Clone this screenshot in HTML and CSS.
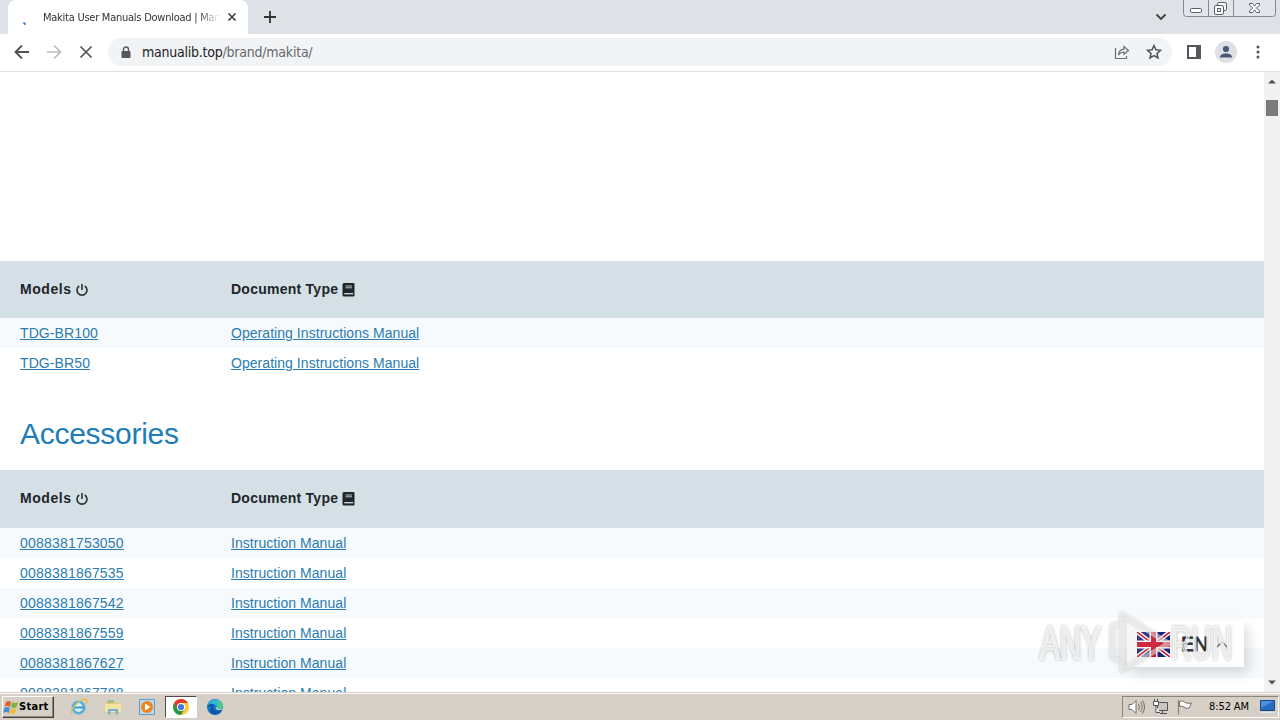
FILE: index.html
```html
<!DOCTYPE html>
<html lang="en">
<head>
    <meta charset="UTF-8">
    <title>Makita User Manuals Download</title>
    <link rel="stylesheet" href="styles.css">
</head>
<body>
    <svg width="0" height="0" class="defs">
        <symbol id="power" viewBox="0 0 14 14">
            <path d="M4.200 3a5 5 0 1 0 5.600 0M7 1v6" fill="none" stroke="#2b3135" stroke-width="1.600"/>
        </symbol>
        <symbol id="book" viewBox="0 0 13 14">
            <path d="M2 0h9.500a1 1 0 0 1 1 1v11.500a1 1 0 0 1-1 1H2a1.500 1.500 0 0 1-1.500-1.500V1.500A1.500 1.500 0 0 1 2 0z" fill="#212529"/>
            <path d="M3.500 3h6.500M3.500 4.800h6.500" stroke="#b5c1c6" stroke-width="1"/>
            <path d="M2.200 10.700h9" stroke="#d4e0e6" stroke-width="1.300"/>
        </symbol>
    </svg>

    <header class="tab-strip">
        <div class="tab">
            <svg class="spinner" width="16" height="16"><path d="M2.500 8.500l2 2.200" stroke="#3b6fd4" stroke-width="1.800" fill="none"/></svg>
            <span class="tab-title">Makita User Manuals Download | Man</span>
            <svg class="tab-close" width="10" height="10"><path d="M1.500 1.500l7 7M8.500 1.500l-7 7" stroke="#3c4043" stroke-width="1.700"/></svg>
        </div>
        <svg class="new-tab" width="12" height="12"><path d="M6 0v12M0 6h12" stroke="#303236" stroke-width="1.800"/></svg>
        <svg class="tab-menu" width="12" height="8"><path d="M1.500 1.500L6 6l4.500-4.500" fill="none" stroke="#3c4043" stroke-width="1.800"/></svg>
        <svg class="window-buttons" width="94" height="18">
            <path d="M.5 0v13.500a3 3 0 0 0 3 3h86a3 3 0 0 0 3-3V0M25.500 0v16M50.500 0v16" fill="#e2e5eb" stroke="#85888f"/>
            <g fill="#fff" stroke="#5c5f66">
                <rect x="7.500" y="8.500" width="11" height="4" rx="1"/>
                <rect x="34.500" y="2.500" width="9" height="8" rx="1.500"/>
                <rect x="31.500" y="5.500" width="9" height="9" rx="1.500"/>
                <rect x="34.500" y="8.500" width="3" height="3"/>
                <path d="M66.500 3.500h3l2 2.500 2-2.500h3v1.500L73.500 8l3 3v1.500h-3l-2-2.500-2 2.500h-3V11l3-3-3-3z"/>
            </g>
        </svg>
    </header>

    <nav class="toolbar">
        <svg width="16" height="16"><path d="M15 8H2M8 1.500L1.500 8 8 14.500" fill="none" stroke="#505357" stroke-width="1.900"/></svg>
        <svg width="16" height="16"><path d="M1 8h13M8 1.500L14.500 8 8 14.500" fill="none" stroke="#b9bbbe" stroke-width="1.700"/></svg>
        <svg width="16" height="16"><path d="M2.500 2.500l11 11M13.500 2.500l-11 11" stroke="#505357" stroke-width="1.700"/></svg>
        <div class="address">
            <svg class="lock" width="10" height="13"><path d="M2.500 6V3.500a2.500 2.500 0 0 1 5 0V6" fill="none" stroke="#55585d" stroke-width="1.400"/><rect x=".5" y="5" width="9" height="7" rx="1" fill="#55585d"/></svg>
            <span class="url"><b>manualib.top</b>/brand/makita/</span>
            <svg class="share" width="16" height="16"><path d="M1.500 4v10.500h11V12M4.500 11c.3-3.800 2.200-5.700 5.500-5.800V2.500L14.500 6.500 10 10.300V8C7.500 8 5.800 9 4.500 11z" fill="none" stroke="#6b6e73" stroke-width="1.200"/></svg>
            <svg class="star" width="16" height="16"><path d="M8 1.500l1.900 4.300 4.600.5-3.500 3.100 1 4.600L8 11.600 4 14l1-4.600L1.500 6.300l4.600-.5z" fill="none" stroke="#505357" stroke-width="1.500"/></svg>
        </div>
        <svg class="side-panel" width="14" height="14"><path d="M1 1h12v12H1z" fill="#fff" stroke="#55585d" stroke-width="2"/><path d="M9 0h5v14H9z" fill="#55585d"/></svg>
        <svg class="avatar" width="22" height="22"><circle cx="11" cy="11" r="11" fill="#dde1e6"/><circle cx="11" cy="8" r="3.100" fill="#4a5878"/><path d="M5 16.500c0-3 2.500-4 6-4s6 1 6 4z" fill="#4a5878"/></svg>
        <svg class="dots" width="4" height="14" fill="#505357"><circle cx="2" cy="2" r="1.500"/><circle cx="2" cy="7" r="1.500"/><circle cx="2" cy="12" r="1.500"/></svg>
    </nav>

    <div class="viewport">
        <main class="page">
            <div class="ad-space"></div>
            <div class="row head">
                <span class="col">Models <svg class="power" width="14" height="14"><use href="#power"/></svg></span>
                <span class="type">Document Type <svg class="book" width="13" height="14"><use href="#book"/></svg></span>
            </div>
            <div class="row odd"><span class="col"><a href="#" class="code">TDG-BR100</a></span><a href="#">Operating Instructions Manual</a></div>
            <div class="row"><span class="col"><a href="#" class="code">TDG-BR50</a></span><a href="#">Operating Instructions Manual</a></div>
            <h2>Accessories</h2>
            <div class="row head second">
                <span class="col">Models <svg class="power" width="14" height="14"><use href="#power"/></svg></span>
                <span class="type">Document Type <svg class="book" width="13" height="14"><use href="#book"/></svg></span>
            </div>
            <div class="row odd"><span class="col"><a href="#" class="number">0088381753050</a></span><a href="#">Instruction Manual</a></div>
            <div class="row"><span class="col"><a href="#" class="number">0088381867535</a></span><a href="#">Instruction Manual</a></div>
            <div class="row odd"><span class="col"><a href="#" class="number">0088381867542</a></span><a href="#">Instruction Manual</a></div>
            <div class="row"><span class="col"><a href="#" class="number">0088381867559</a></span><a href="#">Instruction Manual</a></div>
            <div class="row odd"><span class="col"><a href="#" class="number">0088381867627</a></span><a href="#">Instruction Manual</a></div>
            <div class="row"><span class="col"><a href="#" class="number">0088381867788</a></span><a href="#">Instruction Manual</a></div>
        </main>
        <div class="scrollbar">
            <svg width="8" height="5"><path d="M0 4.500L4 .5l4 4z" fill="#505050"/></svg>
            <div class="thumb"></div>
            <svg class="down" width="8" height="5"><path d="M0 .5l4 4 4-4z" fill="#505050"/></svg>
        </div>

        <div class="language">
            <svg width="33" height="25" viewBox="0 0 33 25">
                <path fill="#1c2478" d="M0 0h33v25H0z"/>
                <path d="M0 0l33 25M33 0L0 25" stroke="#fff" stroke-width="4.500"/>
                <path d="M0 0l33 25M33 0L0 25" stroke="#d0142c" stroke-width="1.600"/>
                <path d="M16.500 0v25M0 12.500h33" stroke="#fff" stroke-width="8"/>
                <path d="M16.500 0v25M0 12.500h33" stroke="#d0142c" stroke-width="5"/>
            </svg>
            <span>EN</span>
            <svg class="caret" width="12" height="8"><path d="M1 7l5-5 5 5" fill="none" stroke="#777" stroke-width="1.500"/></svg>
        </div>
        <svg class="watermark" width="220" height="80" viewBox="0 0 220 80">
            <g class="mark">
                <text x="12" y="57" textLength="61" lengthAdjust="spacingAndGlyphs">ANY</text>
                <text x="143" y="57" textLength="61" lengthAdjust="spacingAndGlyphs">RUN</text>
                <path d="M91 21l-7 3v32l7 3M94 13v55l47-26.500z"/>
            </g>
        </svg>
    </div>

    <footer class="taskbar">
        <div class="start">
            <svg width="16" height="16"><path d="M3 3q3-2 5 0L7 8q-3-2-5.500 0z" fill="#e8612c"/><path d="M9 3q3 2 6 0l-1.500 5q-3 2-5.500 0z" fill="#76b83f"/><path d="M1.300 9q3-2 5.500 0l-1 5q-3-2-5.800 0z" fill="#4a8ed8"/><path d="M7.800 9.200q3 2 5.500 0L12 14q-3 2-5.500 0z" fill="#f3bd32"/></svg>
            <span>Start</span>
        </div>
        <div class="task"><svg width="18" height="18"><circle cx="8.500" cy="9.500" r="5.700" fill="#d9f2fa" stroke="#55b0dd" stroke-width="2.600"/><path d="M4 9.500h9.500" stroke="#3d9ad0" stroke-width="2"/><path d="M2 15.500C-1 11 12-1 16.500 2c1 1 .5 2.500-.5 4" fill="none" stroke="#e6bd43" stroke-width="1.300"/></svg></div>
        <div class="task"><svg width="18" height="18"><path d="M2 3h6l1 2h7v10H2z" fill="#e5c873"/><path d="M4 2h6v3H4z" fill="#9cc48a"/><path d="M1 6h16v8H1z" fill="#f5e3a3"/><path d="M4 16.500V11h10v5.500h-2.500V13h-5v3.500z" fill="#72b2d8"/></svg></div>
        <div class="task"><svg width="18" height="18"><path d="M1.500 1.500h15v15h-15z" fill="#b8d9f2" stroke="#6699c9"/><circle cx="9" cy="9" r="6" fill="#f08520"/><path d="M7 5.500v7L12.500 9z" fill="#fff"/></svg></div>
        <div class="task active"><svg width="18" height="18" viewBox="0 0 18 18"><circle cx="9" cy="9" r="8" fill="#fcc934"/><path d="M9 9L2.100 5A8 8 0 0 0 9 17l3.500-6z" fill="#279847"/><path d="M9 5h6.900A8 8 0 0 0 2.100 5l3.500 6z" fill="#e33b2e"/><circle cx="9" cy="9" r="4" fill="#fff"/><circle cx="9" cy="9" r="3.100" fill="#3b78e7"/></svg></div>
        <div class="task"><svg width="18" height="18"><circle cx="9" cy="9" r="8" fill="#1976c9"/><path d="M1.500 8C3 0 15-1 17 7c.5 4-3 5-6.500 4.500 2-3-1-5.500-4-5C4 6.500 2.500 7 1.500 8z" fill="#35b5d0"/><path d="M12 2c4 1.500 5.500 5 4.800 7-.8 2-3.300 2.800-6.300 2.500C13 8 12 5 12 2z" fill="#4cc98a"/><path d="M1 9c2-5 8-3 7-1-2 4 3 6 8 4-2 5-9 6-12 2-1-2 .5-4 2-5-3-1-4 0-5 0z" fill="#0c59a4"/><path d="M10 8.500c-1 3 3 4.500 7 3l1 1v-2c-3 1.500-6 1-8-2z" fill="#d6cfc6"/></svg></div>
        <div class="tray">
            <svg width="18" height="16" fill="none" stroke="#73716d"><path d="M1 5.500h3l4-4v13l-4-4H1z" fill="#fff"/><path d="M10.500 5q2 3 0 6M12.500 3q3.500 5 0 10M14.500 1.500q4 6.500 0 13"/></svg>
            <svg width="18" height="16"><path d="M5.500 3.500h10v8h-10z" fill="#c9c7c3" stroke="#55534f"/><path d="M8 14.500h7M10.500 12v2" stroke="#55534f"/><path d="M1.500 2.500h5v4h-5zM2.500 0v2M5.500 0v2M4 7v6.500h4" fill="#fff" stroke="#55534f"/></svg>
            <svg width="18" height="16"><path d="M2.500 1v14.500" stroke="#85837f" stroke-width="1.200"/><path d="M3.500 2.500q3-2 5.500 1 3 1.500 6.500.5L13 9q-3 1-5-1-2-1.500-4.500-.5z" fill="#fff" stroke="#75736f"/></svg>
            <time>8:52 AM</time>
            <svg class="desktop" width="17" height="15"><path d="M1.500 1.500h14v10h-14z" fill="#286bc0" stroke="#16468d"/><path d="M2 2h13L2 9z" fill="#4b91db"/><path d="M2 13.500h13" stroke="#d3edff"/></svg>
        </div>
    </footer>
</body>
</html>
```
FILE: styles.css
```css
* {
    box-sizing: border-box;
}
body {
    margin: 0;
    width: 1280px;
    height: 720px;
    overflow: hidden;
    background: #fff;
    font-family: "Liberation Sans", Arial, sans-serif;
    display: flex;
    flex-direction: column;
}
svg {
    flex: none;
}
.defs {
    position: absolute;
}
.tab-strip {
    height: 34px;
    flex: none;
    background: #dee1e6;
    display: flex;
    align-items: flex-start;
}
.tab {
    width: 240px;
    height: 34px;
    margin-left: 8px;
    padding: 0 12px 0 13px;
    background: #fff;
    border-radius: 8px 8px 0 0;
    display: flex;
    align-items: center;
}
.spinner {
    margin: 10px 6px 0 0;
}
.tab-title {
    width: 176px;
    font: 11px "DejaVu Sans Condensed", "DejaVu Sans", sans-serif;
    letter-spacing: -0.25px;
    color: #303236;
    white-space: nowrap;
    mask-image: linear-gradient(to right, #000 155px, transparent 177px);
}
.tab-close {
    margin-left: 8px;
}
.new-tab {
    margin: 11px 0 0 16px;
}
.tab-menu {
    margin: 13px 16px 0 auto;
}
.window-buttons {
    margin-right: 3px;
}
.toolbar {
    height: 38px;
    flex: none;
    padding: 0 0 1px 14px;
    border-bottom: 1px solid #dcdee1;
    display: flex;
    align-items: center;
    gap: 16px;
}
.address {
    width: 1064px;
    height: 28px;
    margin-left: -2px;
    padding: 0 10px 0 13px;
    border-radius: 14px;
    background: #f1f3f4;
    display: flex;
    align-items: center;
    margin-right: -1px;
}
.url {
    margin-left: 11px;
    font: 14px "DejaVu Sans Condensed", "DejaVu Sans", sans-serif;
    letter-spacing: -0.23px;
    color: #65686c;
}
.url b {
    font-weight: normal;
    color: #202124;
}
.share {
    margin-left: auto;
}
.star {
    margin-left: 16px;
}
.avatar {
    margin-left: -2px;
}
.dots {
    margin-left: 3px;
}
.viewport {
    position: relative;
    height: 620px;
    flex: none;
    display: flex;
    overflow: hidden;
}
.page {
    width: 1264px;
    font-size: 14px;
}
.ad-space {
    height: 189px;
}
.row {
    height: 30px;
    padding-left: 20px;
    display: flex;
    align-items: center;
}
.odd {
    background: #f7fafc;
}
.col {
    width: 211px;
}
.row a {
    color: #2b7cb0;
    letter-spacing: 0.05px;
    text-decoration: underline;
    text-underline-offset: 1px;
}
.row .code {
    letter-spacing: 0.1px;
}
.row .number {
    letter-spacing: 0.2px;
}
.head {
    height: 57px;
    padding-bottom: 2px;
    background: #d4e0e6;
    color: #212529;
    font-weight: bold;
    letter-spacing: 0.55px;
}
.second {
    height: 58px;
}
.type {
    letter-spacing: 0.25px;
}
.power,
.book {
    margin-left: -1px;
    vertical-align: -3px;
}
.book {
    margin-left: 0;
}
h2 {
    margin: 0;
    height: 92px;
    padding: 38px 0 0 20px;
    font-size: 30px;
    line-height: 36px;
    font-weight: normal;
    letter-spacing: -0.27px;
    color: #217db9;
}
.scrollbar {
    width: 16px;
    background: #f1f1f1;
    display: flex;
    flex-direction: column;
    align-items: center;
    padding: 7px 0;
}
.thumb {
    width: 12px;
    height: 16px;
    margin-top: 16px;
    background: #7b7b7b;
}
.down {
    margin-top: auto;
}
.language {
    position: absolute;
    left: 1127px;
    top: 549px;
    width: 117px;
    height: 46px;
    padding-left: 10px;
    background: #fff;
    box-shadow: 4px 6px 12px rgba(0, 0, 0, 0.15);
    display: flex;
    align-items: center;
    color: #333;
    font-size: 20px;
    -webkit-text-stroke: 0.8px #333;
}
.language span {
    margin-left: 11px;
    letter-spacing: -0.5px;
}
.caret {
    margin-left: 8px;
}
.watermark {
    position: absolute;
    left: 1028px;
    top: 530px;
}
.mark {
    font-family: "Liberation Sans", Arial, sans-serif;
    font-size: 46px;
    fill: rgba(255, 255, 255, 0.6);
    stroke: rgba(255, 255, 255, 0.6);
    stroke-width: 2px;
    filter: drop-shadow(0 0 1.5px rgba(0, 0, 0, 0.4));
}
.mark path {
    fill: rgba(255, 255, 255, 0.1);
    stroke: rgba(255, 255, 255, 0.5);
    stroke-width: 5px;
    stroke-linejoin: round;
}
.taskbar {
    height: 28px;
    flex: none;
    background: #d6cfc6;
    border-top: 1px solid #d6cfc6;
    box-shadow: inset 0 1px #fff;
    padding-left: 2px;
    display: flex;
    align-items: center;
}
.start {
    width: 52px;
    height: 22px;
    border: 1px solid;
    border-color: #fff #404040 #404040 #fff;
    box-shadow: inset -1px -1px #918b83;
    display: flex;
    align-items: center;
    font: bold 11px "DejaVu Sans Condensed", "DejaVu Sans", sans-serif;
    color: #000;
}
.start span {
    letter-spacing: 0.3px;
}
.task {
    width: 32px;
    height: 22px;
    margin-right: 2px;
    display: flex;
    align-items: center;
    justify-content: center;
}
.start + .task {
    margin-left: 9px;
}
.active {
    background: #fff;
    border: 1px solid;
    border-color: #504c47 #fff #fff #504c47;
}
.tray {
    width: 157px;
    height: 22px;
    margin: 0 1px 0 auto;
    padding-left: 5px;
    border: 1px solid;
    border-color: #8a857d #fff #fff #8a857d;
    display: flex;
    align-items: center;
    gap: 6px;
    font: 11px "DejaVu Sans Condensed", "DejaVu Sans", sans-serif;
    color: #000;
}
.tray time {
    width: 41px;
    margin-left: 9px;
    white-space: nowrap;
    letter-spacing: -0.1px;
}
.desktop {
    margin-left: 3px;
}
```
